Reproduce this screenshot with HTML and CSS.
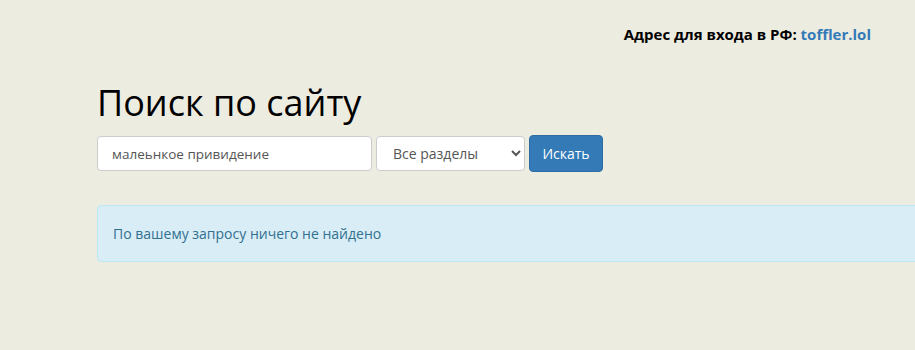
FILE: index.html
```html
<!DOCTYPE html>
<html lang="ru">
  <head>
    <meta charset="utf-8">
    <link rel="stylesheet" href="styles.css">
  </head>
  <body>
    <div class="top-bar">
      <span class="mirror">Адрес для входа в РФ: <a href="#">toffler.lol</a></span>
    </div>

    <div class="container">
      <h1>Поиск по сайту</h1>

      <form class="search-form">
        <input type="text" class="search-input" value="малеьнкое привидение">
        <select class="search-select">
          <option>Все разделы</option>
        </select>
        <button type="submit" class="search-button">Искать</button>
      </form>

      <div class="alert">По вашему запросу ничего не найдено</div>
    </div>
  </body>
</html>
```

FILE: styles.css
```css
body {
  margin: 0;
  background-color: #edece1;
  font-family: "Open Sans", "Noto Sans", sans-serif;
  color: #333;
  overflow: hidden;
}

.top-bar {
  display: flex;
  justify-content: flex-end;
  padding: 24px 44px 0 0;
  height: 28px;
}

.mirror {
  font-weight: bold;
  font-size: 15px;
  color: #000;
}

.mirror a {
  color: #337ab7;
  text-decoration: none;
}

.container {
  margin-left: 97px;
  width: 1100px;
}

h1 {
  font-size: 36px;
  font-weight: normal;
  color: #000;
  margin: 31px 0 12px;
  line-height: 40px;
}

.search-form {
  display: flex;
  gap: 4px;
  align-items: center;
}

.search-input,
.search-select {
  height: 35px;
  box-sizing: border-box;
  border: 1px solid #ccc;
  border-radius: 4px;
  background: #fff;
  font-family: inherit;
  font-size: 14px;
  color: #555;
}

.search-input {
  width: 275px;
  padding: 0 14px;
  font-size: 13.5px;
}

.search-select {
  width: 149px;
  padding: 0 12px 0 12px;
}

.search-button {
  width: 74px;
  height: 37px;
  padding: 0;
  border: 1px solid #2e6da4;
  border-radius: 4px;
  background-color: #337ab7;
  color: #fff;
  font-family: inherit;
  font-size: 14px;
}

.alert {
  margin-top: 33px;
  padding: 18px 15px;
  line-height: 19px;
  border: 1px solid #bce8f1;
  border-radius: 4px;
  background-color: #d9edf7;
  color: #31708f;
  font-size: 14px;
}
```
